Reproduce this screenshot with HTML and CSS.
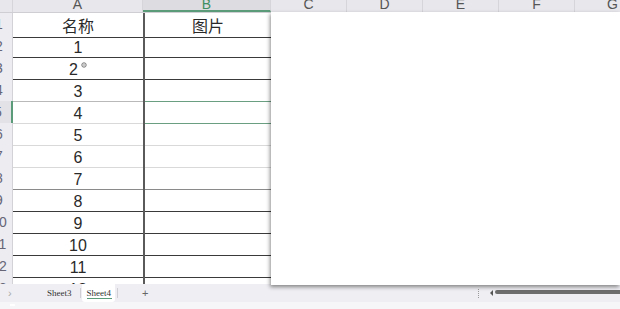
FILE: index.html
```html
<!DOCTYPE html>
<html>
<head>
  <meta charset="utf-8">
  <title>Sheet4</title>
  <link rel="stylesheet" href="styles.css">
</head>
<body>
<div class="app">
  <div class="colhead">
    <div class="corner"></div>
    <div class="ch">A</div>
    <div class="ch sel">B</div>
    <div class="ch narrow">C</div>
    <div class="ch narrow">D</div>
    <div class="ch narrow">E</div>
    <div class="ch narrow">F</div>
    <div class="ch narrow">G</div>
  </div>

  <div class="body">
    <div class="row dark"><div class="rh"><span>1</span></div><div class="ca cjk">名称</div><div class="cb cjk">图片</div></div>
    <div class="row dark"><div class="rh"><span>2</span></div><div class="ca">1</div><div class="cb"></div></div>
    <div class="row dark"><div class="rh"><span>3</span></div><div class="ca">2<svg class="cursor" width="6" height="6" viewBox="0 0 6 6"><circle cx="3" cy="3" r="2.2" fill="none" stroke="#666" stroke-width="0.9"/><path d="M3 1.6v2.8M1.6 3h2.8" stroke="#999" stroke-width="0.6"/></svg></div><div class="cb"></div></div>
    <div class="row soft"><div class="rh"><span>4</span></div><div class="ca">3</div><div class="cb"></div></div>
    <div class="row light cur"><div class="rh"><span>5</span></div><div class="ca">4</div><div class="cb"></div></div>
    <div class="row light"><div class="rh"><span>6</span></div><div class="ca">5</div><div class="cb"></div></div>
    <div class="row light"><div class="rh"><span>7</span></div><div class="ca">6</div><div class="cb"></div></div>
    <div class="row mid"><div class="rh"><span>8</span></div><div class="ca">7</div><div class="cb"></div></div>
    <div class="row dark"><div class="rh"><span>9</span></div><div class="ca">8</div><div class="cb"></div></div>
    <div class="row dark"><div class="rh"><span>10</span></div><div class="ca">9</div><div class="cb"></div></div>
    <div class="row dark"><div class="rh"><span>11</span></div><div class="ca">10</div><div class="cb"></div></div>
    <div class="row dark"><div class="rh"><span>12</span></div><div class="ca">11</div><div class="cb"></div></div>
    <div class="row dark"><div class="rh"><span>13</span></div><div class="ca">12</div><div class="cb"></div></div>
  </div>

  <div class="tabs">
    <span class="nav">&#x203A;</span>
    <span class="tab">Sheet3</span>
    <span class="sep"></span>
    <span class="tab active">Sheet4</span>
    <span class="sep"></span>
    <span class="add">+</span>
    <div class="hscroll">
      <span class="grip"></span>
      <span class="arrow"></span>
      <span class="thumb"></span>
    </div>
  </div>
  <div class="status"><span class="dot"></span></div>

  <div class="panel"></div>
</div>
</body>
</html>
```

FILE: styles.css
```css
* { box-sizing: border-box; }
html, body { margin: 0; padding: 0; }
body { width: 620px; height: 309px; overflow: hidden; background: #efeef2;
       font-family: "Liberation Sans", "Noto Sans CJK SC", sans-serif; color: #222; }

.app { position: relative; display: flex; flex-direction: column; height: 309px; }

/* column letters */
.colhead { display: flex; height: 13px; flex: none; background: #e8e7eb;
           border-bottom: 1px solid #cfced3; overflow: hidden; }
.corner { width: 13px; flex: none; border-right: 1px solid #d6d5da; }
.ch { width: 130px; flex: none; border-right: 1px solid #d6d5da; text-align: center;
      font-size: 14px; line-height: 9px; color: #555; }
.ch.sel { width: 128px; background: #dddce0; color: #3f8f62; border-bottom: 2px solid #5c9b79; }
.ch.narrow { width: 76px; }

/* grid */
.body { height: 271px; flex: none; overflow: hidden; background: #fff; }
.row { display: grid; grid-template-columns: 13px 130px 128px; height: 22px; }
.rh { display: flex; justify-content: flex-end; overflow: hidden; background: #edecf0;
      border-right: 1px solid #d3d2d7; border-bottom: 1px solid #dedde2; }
.rh span { flex: none; width: 26px; text-align: center; font-size: 14px; line-height: 23px; color: #667; }
.ca, .cb { display: flex; align-items: center; justify-content: center; font-size: 16px;
           padding-top: 4px; color: #2a2a2a; border-bottom: 1px solid #3a3a3a; }
.cb { border-left: 2px solid #5a5a5a; }
.cjk { font-family: "Noto Sans CJK SC", sans-serif; font-size: 16px; padding-top: 0; }
.cursor { align-self: flex-start; margin: 1px 0 0 3px; }

.row.soft .ca { border-bottom-color: #b9b9b9; }
.row.soft .cb { border-bottom-color: #6a9f82; }
.row.light .ca, .row.light .cb { border-bottom-color: #d9d9d9; }
.row.cur .cb { border-bottom-color: #6a9f82; }
.row.cur .rh { border-right: 2px solid #5c9b79; background: #e3e2e6; }
.row.mid .ca, .row.mid .cb { border-bottom-color: #8a8a8a; }

/* sheet tabs */
.tabs { height: 18px; flex: none; display: flex; align-items: center; font-size: 9px; }
.nav { width: 13px; margin-left: 8px; color: #aaa; font-size: 11px; }
.tab { font-family: "Liberation Serif", serif; color: #333; padding: 0 6px; margin-left: 20px;
       align-self: stretch; display: flex; align-items: center; }
.tab.active { margin-left: 1px; background: #fff; padding: 0 4px 0 5px; border-radius: 0 0 3px 3px;
              position: relative; }
.tab.active::after { content: ""; position: absolute; left: 5px; right: 3px; bottom: 3px;
                     height: 1px; background: #5c9b79; }
.sep { width: 1px; height: 10px; background: #d0cfd4; margin-left: 2px; }
.add { margin-left: 24px; color: #666; font-size: 11px; }

.hscroll { margin-left: auto; display: flex; align-items: center; width: 142px; height: 18px; }
.grip { width: 1px; height: 9px; border-left: 1px dotted #9a9a9a; }
.arrow { width: 0; height: 0; margin-left: 11px; border-top: 3px solid transparent;
         border-bottom: 3px solid transparent; border-right: 3px solid #555; }
.thumb { flex: 1; height: 4px; margin-left: 2px; margin-top: -2px; background: #6d6d6d; border-radius: 2px 0 0 2px; }

.status { height: 7px; flex: none; background: #f6f5f8; position: relative; }
.dot { position: absolute; left: 10px; top: 2px; width: 5px; height: 2px; background: #fff; }

/* floating white window lying over the sheet */
.panel { position: absolute; left: 271px; top: 12px; right: 0; height: 273px; background: #fff;
         box-shadow: -1px 2px 4px rgba(0, 0, 0, 0.45); }
```
